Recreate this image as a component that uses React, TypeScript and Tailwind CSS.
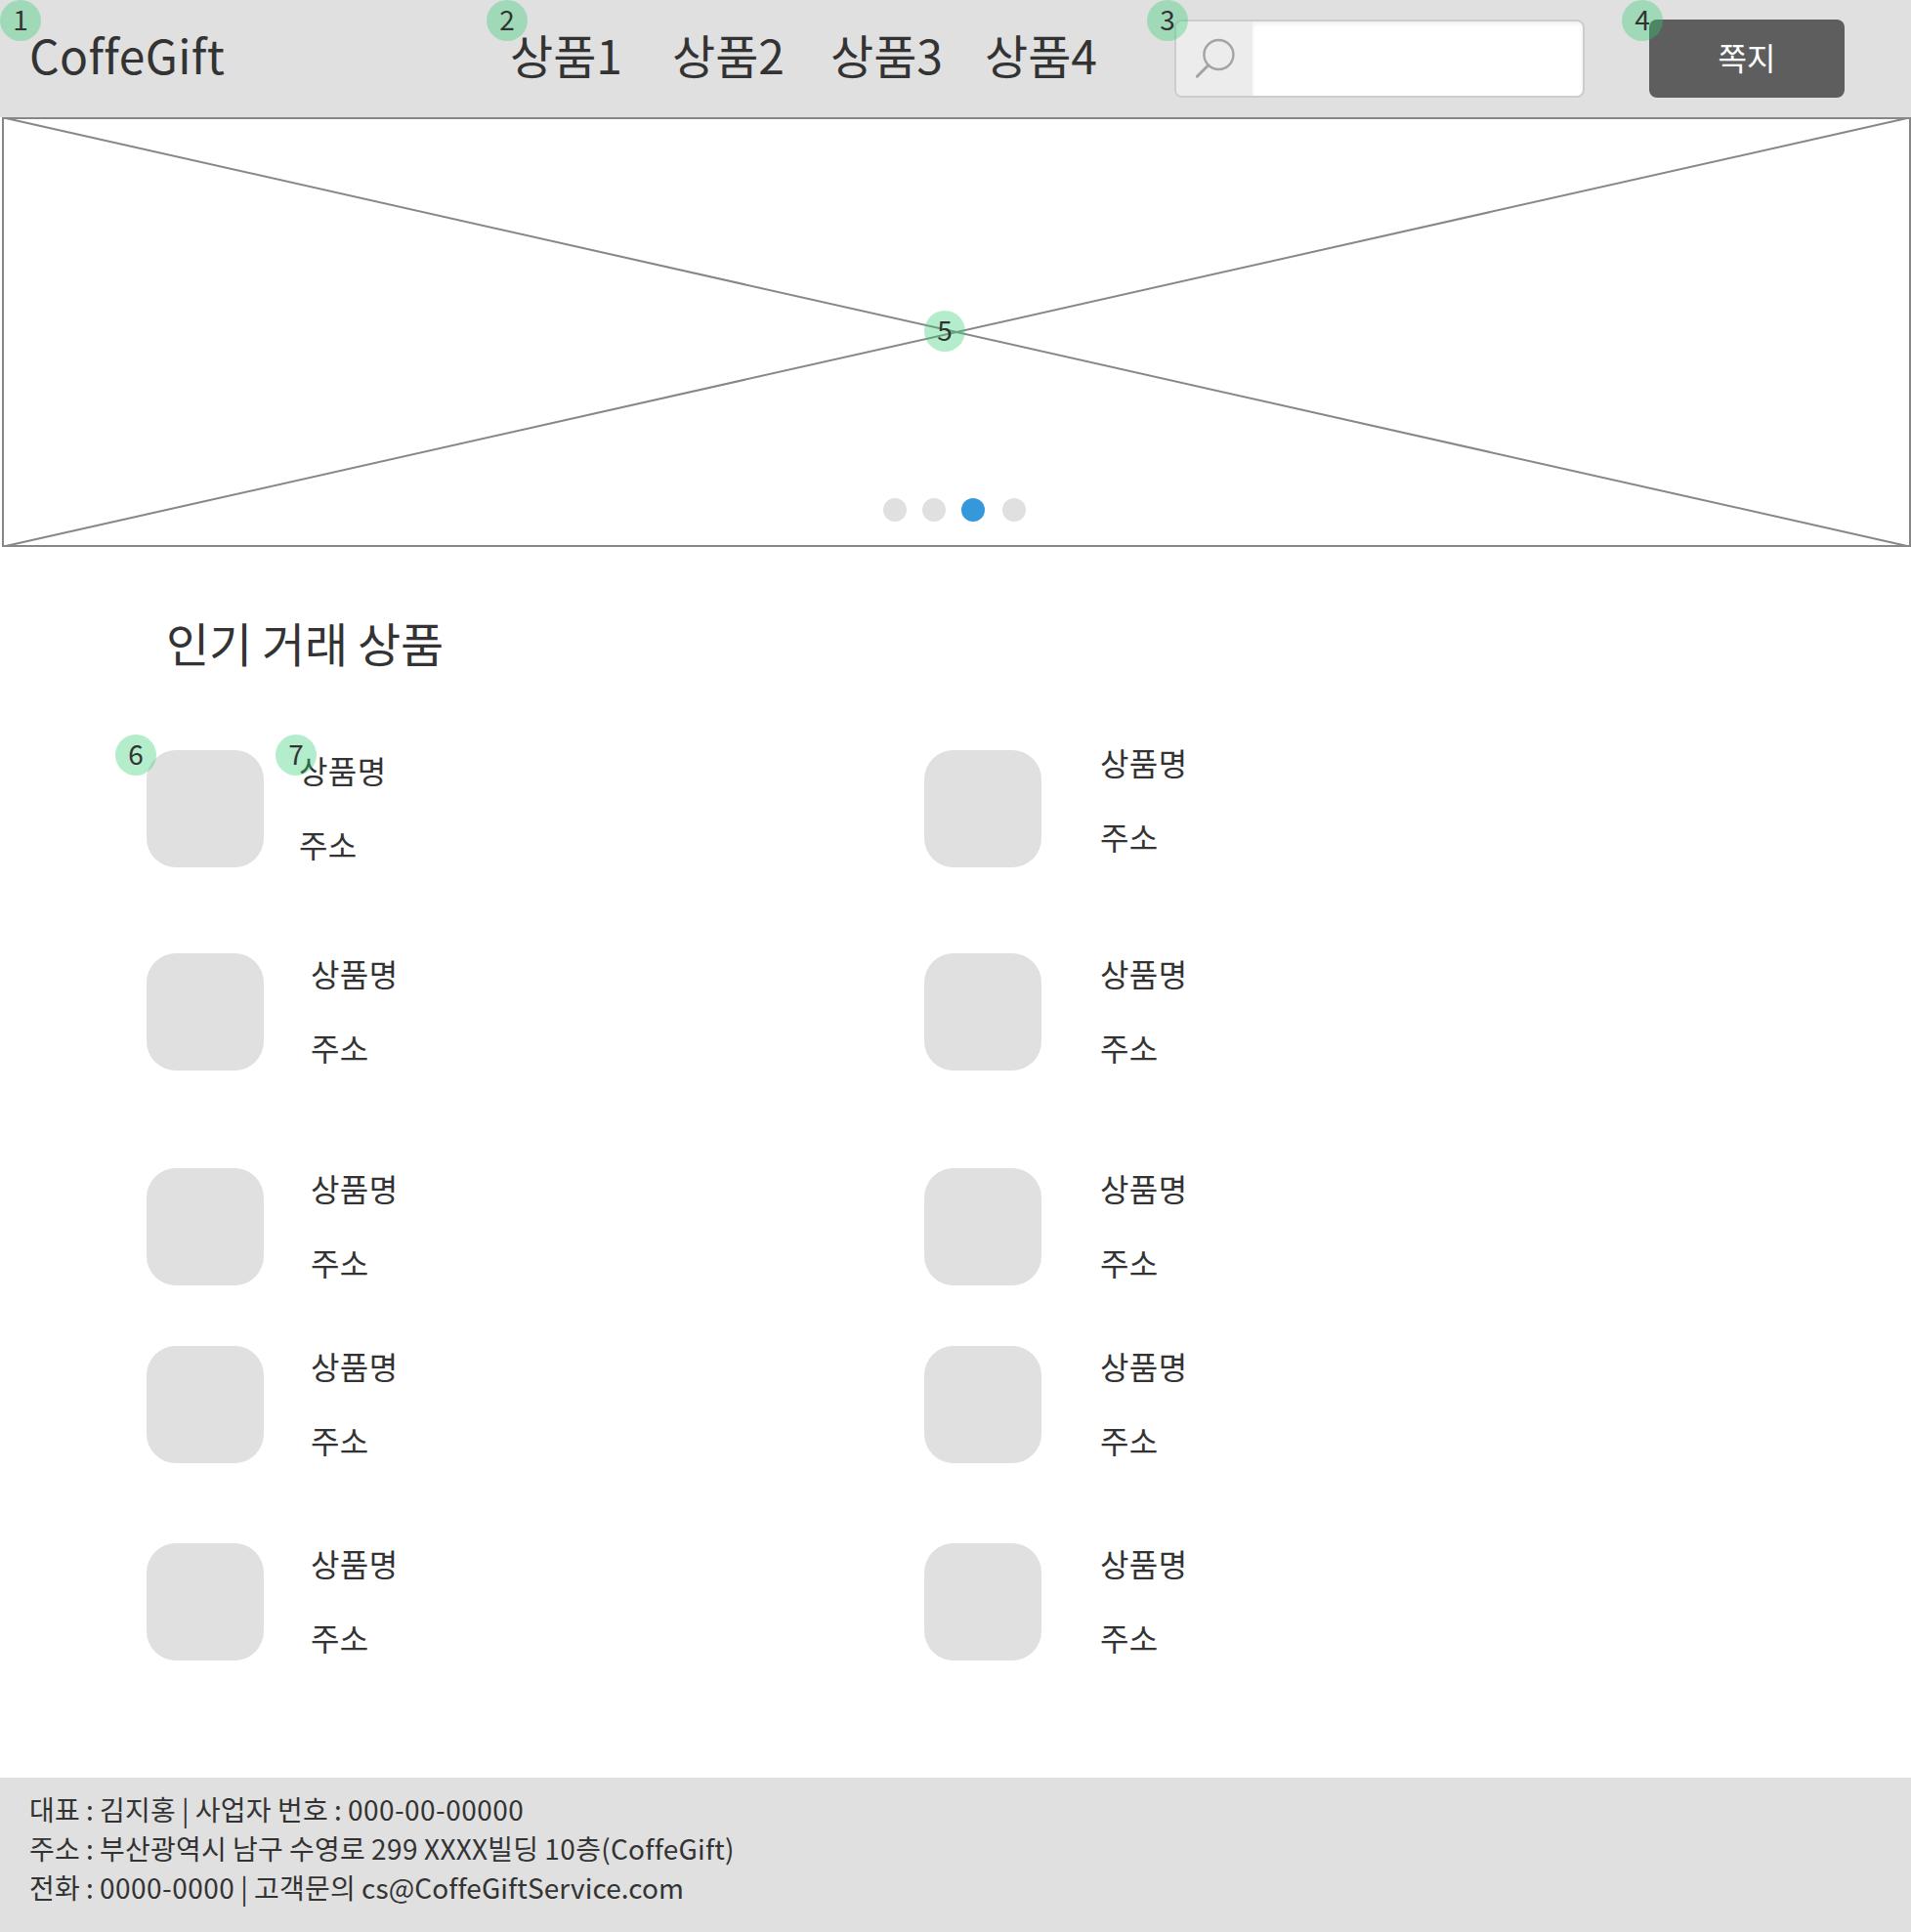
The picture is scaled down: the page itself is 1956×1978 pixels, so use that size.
const rows = [
  { left: "pl-[36px]", right: "-mt-[8px]", height: "h-[208px]" },
  { left: "pl-[48px]", right: "", height: "h-[220px]" },
  { left: "pl-[48px]", right: "", height: "h-[182px]" },
  { left: "pl-[48px]", right: "", height: "h-[202px]" },
  { left: "pl-[48px]", right: "", height: "h-[240px]" },
];

function Badge({ n, className }: { n: number; className: string }) {
  return (
    <span
      className={`absolute z-10 flex h-[42px] w-[42px] justify-center rounded-full bg-[#2ecc71]/36 text-[28px] leading-[39px] text-[#333333] ${className}`}
    >
      {n}
    </span>
  );
}

function Product({ className }: { className: string }) {
  return (
    <div className={`flex flex-col gap-[36px] text-[32px] leading-[40px] tracking-[0.4px] ${className}`}>
      <p>상품명</p>
      <p>주소</p>
    </div>
  );
}

function Tile() {
  return <div className="size-[120px] shrink-0 rounded-[30px] bg-[#e0e0e0]" />;
}

function Num({ children }: { children: string }) {
  return <span className="tracking-[0.46px]">{children}</span>;
}

export default function App() {
  return (
    <div className="relative flex h-[1978px] w-[1956px] flex-col overflow-hidden bg-white font-['Noto_Sans_CJK_KR',sans-serif] text-[#333333] [font-variant-ligatures:none]">
      <header className="relative flex h-[120px] shrink-0 items-start bg-[#e0e0e0] pl-[30px] pt-[20px]">
        <h1 className="w-[492px] text-[48px] leading-[70px] tracking-[0.35px]">CoffeGift</h1>
        <nav className="flex w-[680px] text-[48px] leading-[70px]">
          <a className="w-[166px]">상품1</a>
          <a className="w-[162px]">상품2</a>
          <a className="w-[158px]">상품3</a>
          <a>상품4</a>
        </nav>
        <div className="flex h-[80px] w-[420px] overflow-hidden rounded-[8px] border-2 border-[#cccccc] bg-white">
          <div className="flex w-[78px] items-center justify-center bg-[#ececec]">
            <svg width="42" height="42" viewBox="0 0 42 42" fill="none" stroke="#a3a3a3" strokeWidth="2.4">
              <circle cx="25.4" cy="17" r="15" />
              <path d="M14.8 27.8 L3.3 39.3" strokeLinecap="round" strokeWidth="3" />
            </svg>
          </div>
          <div className="grow shadow-[inset_0_3px_4px_rgba(0,0,0,0.06)]" />
        </div>
        <button className="ml-[66px] h-[80px] w-[200px] rounded-[8px] bg-[#5e5e5e] pb-[5px] text-[32px] text-white">쪽지</button>
        <Badge n={1} className="left-0 top-0" />
        <Badge n={2} className="left-[498px] top-0" />
        <Badge n={3} className="left-[1174px] top-0" />
        <Badge n={4} className="left-[1660px] top-0" />
      </header>
      <section className="relative ml-[2px] flex h-[440px] shrink-0 items-end">
        <svg className="absolute inset-0" width="1954" height="440" fill="none" stroke="#878787" strokeWidth="2">
          <rect x="1" y="1" width="1952" height="438" />
          <path d="M4 1 L1950 439 M1950 1 L4 439" />
        </svg>
        <div className="relative mb-[26px] ml-[902px] flex">
          <span className="mr-[16px] size-[24px] rounded-full bg-[#e0e0e0]" />
          <span className="mr-[16px] size-[24px] rounded-full bg-[#e0e0e0]" />
          <span className="mr-[18px] size-[24px] rounded-full bg-[#3498db]" />
          <span className="size-[24px] rounded-full bg-[#e0e0e0]" />
        </div>
        <Badge n={5} className="left-[944px] top-[198px]" />
      </section>
      <main className="relative grow">
        <h2 className="ml-[170px] mt-[60px] h-[148px] text-[48px] leading-[74px] tracking-[-0.16px] [word-spacing:-0.6px]">
          인기 거래 상품
        </h2>
        {rows.map((row, i) => (
          <div key={i} className={`flex items-start pl-[150px] ${row.height}`}>
            <div className="flex w-[796px] items-start">
              <Tile />
              <Product className={row.left} />
            </div>
            <Tile />
            <Product className={`pl-[60px] ${row.right}`} />
          </div>
        ))}
        <Badge n={6} className="left-[118px] top-[192px]" />
        <Badge n={7} className="left-[282px] top-[192px]" />
      </main>
      <footer className="h-[158px] shrink-0 bg-[#e0e0e0] pl-[30px] pt-[12px] text-[28px] leading-[40px] tracking-[0.24px] [word-spacing:-0.5px]">
        <p>
          대표 : 김지홍 | 사업자 번호 : <Num>000-00-00000</Num>
        </p>
        <p>
          주소 : 부산광역시 남구 수영로 <Num>299</Num> XXXX빌딩 <Num>10</Num>층(CoffeGift)
        </p>
        <p>
          전화 : <Num>0000-0000</Num> | 고객문의 <span className="tracking-[0.09px]">cs@CoffeGiftService.com</span>
        </p>
      </footer>
    </div>
  );
}
